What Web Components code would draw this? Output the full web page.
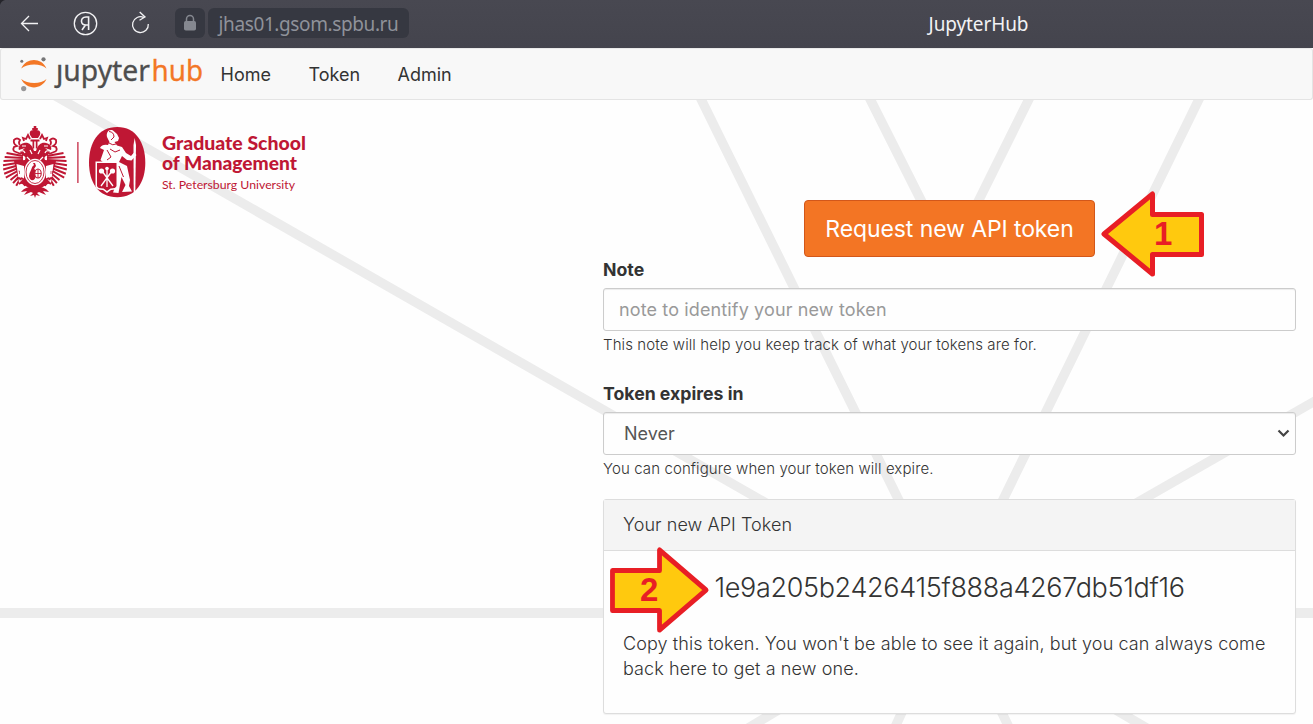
<!DOCTYPE html>
<html lang="en">
<head>
<meta charset="utf-8">
<title>JupyterHub</title>
<style>
html,body{margin:0;height:100%}
body{font-family:Inter,"Liberation Sans",sans-serif;color:#333;background:#fefefe;overflow:hidden}
</style>
</head>
<body>
<hub-app></hub-app>
<script>
const define=(name,html)=>{
  const t=document.createElement('template');
  t.innerHTML=html;
  customElements.define(name,class extends HTMLElement{
    constructor(){super();this.attachShadow({mode:'open'}).append(t.content.cloneNode(true));}
  });
};

define('browser-bar',`
<style>
:host{display:grid;grid-template-columns:175px auto 1fr;height:48px;background:linear-gradient(#484851,#44444d);align-items:center;box-sizing:border-box;position:relative;font-family:"Noto Sans","Open Sans",sans-serif}
.icons{display:flex;height:48px}
.icons svg{width:175px;height:48px}
.addr{display:flex;gap:3px;margin-bottom:2px;color:#8f929a;font-size:20px}
.lock{width:30px;height:30px;border-radius:6px;background:#363841;display:grid;place-items:center}
.url{width:201px;height:30px;border-radius:6px;background:#363841;line-height:32px;text-align:center;white-space:nowrap}
.url span{font-size:19px;letter-spacing:-.39px}
.title{position:absolute;left:878.500px;width:200px;text-align:center;top:10px;line-height:28px;font-size:19px;color:#f2f2f4;letter-spacing:-.1px}
</style>
<div class="icons"><svg viewBox="0 0 175 48" fill="none" stroke="#f2f2f4" stroke-width="1.3">
<path d="M0 0H5Q1 1 0 5Z" fill="#25252b" stroke="none"/>
<path d="M21.500 23.500H38M29 16L21.500 23.500L29 31"/>
<circle cx="85.500" cy="23.500" r="11.200"/>
<path d="M88.600 30V17H86C82.500 17 81.300 19.300 81.500 21.500C81.700 24 83.500 25 86 25H88.600M85.500 25L82 30" stroke-width="1.600"/>
<path d="M143.800 17.500A7.900 7.900 0 1 0 148.300 24M139.700 12L145 17L139.500 20.300"/>
</svg></div>
<div class="addr"><div class="lock"><svg width="14" height="18" viewBox="0 0 14 18"><path d="M3.500 8V5a3.500 3.500 0 0 1 7 0V8" fill="none" stroke="#858890" stroke-width="1.500"/><rect x="1" y="7" width="12" height="9.500" rx="1.800" fill="#858890"/></svg></div><div class="url"><span><slot></slot></span></div></div>
<div class="title"><slot name="title"></slot></div>
`);

define('jupyter-logo',`
<style>:host{display:block;width:186px;height:50px}svg{display:block}text{font-family:"Noto Sans","Open Sans",sans-serif;font-size:28.500px;stroke-width:.3}</style>
<svg width="206" height="50" viewBox="0 0 206 50">
<path d="M20.200 19.500C25.500 8.300 40.500 8.300 45.500 19.500C40 14.300 26.500 14.300 20.200 19.500Z" fill="#f37726"/>
<path d="M20.200 30C25.500 41.200 40.500 41.200 45.500 30C40 35.300 26.500 35.300 20.200 30Z" fill="#f37726"/>
<circle cx="42.500" cy="10.300" r="2.100" fill="#767677"/><circle cx="20.800" cy="12.200" r="1.500" fill="#767677"/><circle cx="22.700" cy="39.600" r="2.600" fill="#989798"/>
<text x="55" y="32" fill="#4e4e4e" stroke="#4e4e4e" textLength="94" lengthAdjust="spacingAndGlyphs">&#x237;upyter</text>
<text x="150.500" y="32" fill="#f37726" stroke="#f37726" textLength="51.500" lengthAdjust="spacingAndGlyphs">hub</text>
</svg>`);

define('hub-nav',`
<style>
:host{display:flex;height:52px;background:#f8f8f8;border:1px solid #e4e4e4;border-top-color:#e9e9e9;border-radius:3px;box-sizing:border-box;align-items:center;font-size:18px;color:#333;letter-spacing:0}
jupyter-logo{width:219.500px;height:50px;flex:none}
nav{display:flex;gap:37.500px;line-height:50px;padding-top:2px}
</style>
<jupyter-logo></jupyter-logo><nav><slot></slot></nav>`);

define('web-backdrop',`
<style>:host{display:block;position:absolute;inset:0;z-index:-1}svg{display:block}</style>
<svg width="1313" height="724" viewBox="0 0 1313 724" fill="none" stroke="#ececec" stroke-width="9.500">
<path d="M52 94L951 609L1322 397M696 89L951 606L1204 89M865 89L941 240M959 240L1034 89M951 606L740 733M951 606L890 738M951 606L1014 738M951 613L1150 730"/>
<path d="M0 613H1313" stroke-width="10"/>
</svg>`);

// Crest of the university, oval emblem and wordmark of the school
const feathers=(()=>{
  let d='';
  for(let i=0;i<10;i++){
    const a=(-27+i*8.5)*Math.PI/180, r=i<7?32:29;
    const sx=49,sy=160;
    const x=35+r*Math.cos(a), y=166+r*Math.sin(a)*.9;
    d+=`M${sx-2} ${(sy-4+i*2).toFixed(1)}L${x.toFixed(1)} ${y.toFixed(1)}`;
    d+=`M${70-sx+2} ${(sy-4+i*2).toFixed(1)}L${(70-x).toFixed(1)} ${y.toFixed(1)}`;
  }
  return d;
})();
define('school-logo',`
<style>:host{display:block}svg{display:block}text{font-family:Lato,"Open Sans",sans-serif}</style>
<svg width="320" height="80" viewBox="0 122 320 80" fill="#bf1734">
<path d="${feathers}" stroke="#bf1734" stroke-width="2" fill="none"/>
<path d="M33.700 126h2.600v2h1.500v2h-1.500c4 0 5 3 3 6l-1.300 2h-6l-1.300-2c-2-3-1-6 3-6h-1.500v-2h1.500Z"/>
<path d="M30.500 139.500h9v2h-2v7h-1.700v-7h-1.600v7h-1.700v-7h-2Z"/>
<path d="M34 151C32 144 28 142 24 143C19 144 18 148 19 150L25 148L20 152C22 157 27 155 25 160L14 161L19 182L29 188H41L51 182L56 161L45 160C43 155 48 157 50 152L45 148L51 150C52 148 51 144 46 143C42 142 38 144 36 151Z"/>
<path d="M21 154L16 152Q12 151 14 147L17 146Q13 144 14 140Q17 137 20 140Q18 143 20 145M49 154L54 152Q58 151 56 147L53 146Q57 144 56 140Q53 137 50 140Q52 143 50 145M24 141L23 138L26 139L28 135L30 139M46 141L47 138L44 139L42 135L40 139" stroke="#bf1734" stroke-width="1.800" fill="none"/>
<path d="M16.500 164L24 166V178L19 183M53.500 164L46 166V178L51 183" fill="#fefefe"/>
<path d="M18.500 171h1v3M51 171v3M52.500 171v3" stroke="#bf1734" stroke-width=".7" fill="none"/>
<path d="M16.500 180q3-4 4 0q1-4 4 1M53.500 180q-3-4-4 0q-1-4-4 1M19 184q4-3 6 2M51 184q-4-3-6 2" stroke="#bf1734" stroke-width="1.800" fill="none"/>
<ellipse cx="35" cy="172" rx="10.800" ry="13.200" fill="#fefefe"/>
<ellipse cx="35" cy="172" rx="9" ry="11.500" fill="none" stroke="#bf1734" stroke-width=".9"/>
<path d="M31 170Q32 166 34 165L33 163H35L36 166L34 169Q37 170 36 176Q35 181 31 180Q27 177 31 170Z"/>
<ellipse cx="38" cy="173.500" rx="3.200" ry="4.500" fill="#fefefe" stroke="#bf1734" stroke-width="1.100"/><path d="M38 169v9M35 173.500h6" stroke="#bf1734" stroke-width=".9"/>
<path d="M21 151q3-1 4 2M49 151q-3-1-4 2M27 157l3 3M43 157l-3 3M22 146l4 0M48 146l-4 0M30 150l2 4M40 150l-2 4" stroke="#fefefe" stroke-width="1.200" fill="none"/>
<path d="M32 187C28 187 24 188 21 192L27 191L24 195L31 192L33 193L30 196L34 195L35 198L36 195L40 196L37 193L39 192L46 195L43 191L49 192C46 188 42 187 38 187Z"/>
<path d="M77.300 142h1.200v41h-1.200Z"/>
<path d="M117.300 127C136 127 145.300 143 145.300 162.500C145.300 182 136 197.300 117.300 197.300C98 197.300 89 182 89 162.500C89 143 98 127 117.300 127Z"/>
<g fill="#fefefe">
<path d="M107 137C106 132 109 129 113 130.500L117 134L119 138L118 141L114.500 142L117 145.500L122 147L126 153L131 156L134 152.500L136.500 155L131.500 160.500L127 160L122 156L119 162L127 166L130 180L129 186L132 191.500L122 192L125.500 185L121.500 177L118.500 193L113 192.500L115 187V166L111 163L105 164L100.500 160L104 150L100 148Q102 144 108 145L109.500 142Z"/>
<path d="M133.500 145L134.700 138L136 145L135.300 192H133.700Z"/>
<path d="M95.500 161.500H118V186Q117 190 111 190L107 193L103 190Q96 190 95.500 186Z"/>
</g>
<path d="M97 163H116.500V186Q116 188.500 110.500 188.500L107 191L103.500 188.500Q97.500 188.500 97 186Z"/>
<path d="M101 186L112 171M113 186L102 171M107 168V187" stroke="#fefefe" stroke-width="1.300" fill="none"/>
<g fill="#fefefe"><circle cx="101.500" cy="171" r="2.600"/><circle cx="112.500" cy="171" r="2.600"/><circle cx="107" cy="168.500" r="1.800"/></g>
<path d="M109 131.500Q114 132 114 137L111 140M109 143Q113 146 116 144M107 150L111 157L107 160M119 166L123.500 177M110 149l5 3L120 150" stroke="#bf1734" stroke-width="1" fill="none"/>
<text x="162" y="149.500" font-size="18.500" font-weight="900" textLength="144" lengthAdjust="spacingAndGlyphs">Graduate School</text>
<text x="162" y="169.500" font-size="18.500" font-weight="900" textLength="135" lengthAdjust="spacingAndGlyphs">of Management</text>
<text x="162" y="189.300" font-size="12.200" font-weight="400" textLength="133" lengthAdjust="spacingAndGlyphs">St. Petersburg University</text>
</svg>`);

define('form-field',`
<style>
:host{display:block;height:124px}
label{display:block;font-weight:700;font-size:17.700px;line-height:23px;height:30px;color:#333}
.box{height:43px;box-sizing:border-box;border:1px solid #ccc;border-radius:3px;background:#fefefe;box-shadow:inset 0 1px 1px rgba(0,0,0,.075);display:flex;align-items:center;justify-content:space-between;padding:0 5px 0 var(--pad,15px);font-size:18px;color:var(--ink,#999);letter-spacing:var(--ls,.13px)}
small{display:block;font-size:15px;line-height:20px;margin-top:4px;color:#333;white-space:nowrap;font-weight:350;letter-spacing:.1px}
</style>
<label><slot name="label"></slot></label>
<div class="box"><slot></slot><slot name="icon"></slot></div>
<small><slot name="help"></slot></small>`);

define('token-panel',`
<style>
:host{display:block;height:215px;box-sizing:border-box;border:1px solid #ddd;border-radius:3px;background:#fefefe;color:#333;box-shadow:0 1px 1px rgba(0,0,0,.05)}
header{height:51px;box-sizing:border-box;border-bottom:1px solid #ddd;background:#f4f4f4;padding-left:19px;line-height:50px;font-size:18px;font-weight:350;letter-spacing:.07px}
.token{margin-top:17px;line-height:40px;font-size:27px;font-weight:300;text-align:center;height:40px;letter-spacing:-.33px}
p{margin:23px 0 0;padding-left:19px;font-size:18px;line-height:25px;white-space:nowrap;font-weight:350;letter-spacing:.105px}
</style>
<header><slot name="heading"></slot></header>
<div class="token"><slot name="token"></slot></div>
<p><slot></slot></p>`);

define('orange-button',`
<style>:host{display:block;width:291px;height:57px;box-sizing:border-box;border:1px solid #d2571a;border-radius:4px;background:#f37524;color:#fff;font-size:23px;line-height:56px;text-align:center;white-space:nowrap;letter-spacing:-.1px}</style><slot></slot>`);

define('callout-arrow',`
<style>
:host{display:block;position:absolute;width:104px;height:90px}
:host([dir=left]){left:1100px;top:189px}
:host([dir=right]){left:607.500px;top:545px}
svg{display:block}
:host([dir=right]) svg{transform:scaleX(-.96)}
b{position:absolute;left:54px;top:25px;font:bold 33px/40px "Liberation Sans",Arial,sans-serif;color:#e81e25}
:host([dir=right]) b{left:32.500px}
</style>
<svg width="104" height="90"><path d="M4 45L52.500 5V25.500H101.500V65.500H52.500V85Z" fill="#ffc90e" stroke="#e81e25" stroke-width="5" stroke-linejoin="round"/></svg><b><slot></slot></b>`);

define('hub-app',`
<style>
:host{display:block;position:relative;width:1313px;height:724px;overflow:hidden;z-index:0}
main{display:grid;grid-template-columns:603px 693px;}
school-logo{padding-top:22px}
.form{padding-top:100px;display:flex;flex-direction:column}
orange-button{align-self:center}
</style>
<web-backdrop></web-backdrop>
<browser-bar>jhas01.gsom.spbu.ru<span slot="title">JupyterHub</span></browser-bar>
<hub-nav><span>Home</span><span>Token</span><span>Admin</span></hub-nav>
<main>
<school-logo></school-logo>
<section class="form">
<orange-button>Request new API token</orange-button>
<form-field style="margin-top:1px"><span slot="label">Note</span>note to identify your new token<span slot="help">This note will help you keep track of what your tokens are for.</span></form-field>
<form-field style="--pad:20px;--ink:#555;--ls:0px;height:117px"><span slot="label">Token expires in</span>Never<svg slot="icon" width="13" height="9" viewBox="0 0 13 9"><path d="M1.500 1.500L6.500 6.500L11.500 1.500" fill="none" stroke="#444" stroke-width="2.200"/></svg><span slot="help">You can configure when your token will expire.</span></form-field>
<token-panel><span slot="heading">Your new API Token</span><span slot="token">1e9a205b2426415f888a4267db51df16</span>Copy this token. You won't be able to see it again, but you can always come<br>back here to get a new one.</token-panel>
</section>
</main>
<callout-arrow dir="left">1</callout-arrow>
<callout-arrow dir="right">2</callout-arrow>
`);
</script>
</body>
</html>
